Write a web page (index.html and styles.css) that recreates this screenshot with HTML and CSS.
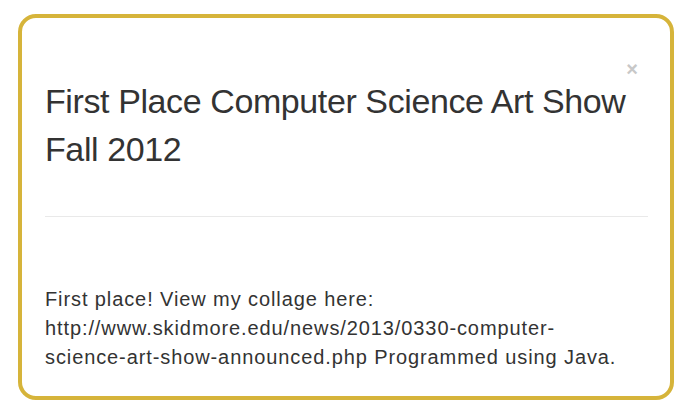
FILE: index.html
```html
<!DOCTYPE html>
<html>
<head>
<meta charset="utf-8">
<link rel="stylesheet" href="styles.css">
</head>
<body>
<div class="modal">
  <div class="modal-header">
    <button class="close" type="button">×</button>
    <h3 class="title">First Place Computer Science Art Show Fall 2012</h3>
  </div>
  <div class="modal-body">
    <p>First place! View my collage here: http://www.skidmore.edu/news/2013/0330-computer-science-art-show-announced.php Programmed using Java.</p>
  </div>
</div>
</body>
</html>
```
FILE: styles.css
```css
html, body {
  margin: 0;
  padding: 0;
  background: #ffffff;
}
body {
  width: 692px;
  height: 418px;
  overflow: hidden;
  font-family: "Liberation Sans", Arial, sans-serif;
  color: #333333;
}
.modal {
  box-sizing: border-box;
  margin: 14px 0 0 18px;
  width: 656px;
  height: 386px;
  border: 4px solid #d6b43a;
  border-radius: 18px;
  padding: 0 22px 0 23px;
  display: flex;
  flex-direction: column;
}
.modal-header {
  position: relative;
  padding-top: 59px;
  padding-bottom: 43px;
  border-bottom: 1px solid #e9e9e9;
}
.close {
  position: absolute;
  top: 41px;
  right: 10px;
  border: 0;
  background: none;
  padding: 0;
  font-family: "Liberation Sans", Arial, sans-serif;
  font-size: 20px;
  font-weight: bold;
  line-height: 20px;
  color: #c8c8c8;
}
.title {
  margin: 0;
  font-size: 34px;
  font-weight: normal;
  letter-spacing: -0.4px;
  line-height: 48px;
  color: #333333;
}
.modal-body p {
  margin: 68px 0 0 0;
  padding-right: 14px;
  font-size: 20px;
  letter-spacing: 0.9px;
  line-height: 29px;
  color: #333333;
}
```
